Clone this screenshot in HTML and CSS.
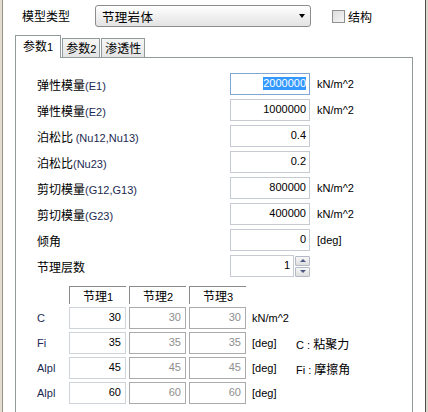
FILE: index.html
```html
<!DOCTYPE html>
<html>
<head>
<meta charset="utf-8">
<link rel="stylesheet" href="styles.css">
</head>
<body>
<div class="win">
  <div class="edge-l"></div>
  <div class="main">
    <div class="toprow">
      <div class="toplabel">模型类型</div>
      <div class="combo">
        <span class="combo-text">节理岩体</span>
        <span class="combo-arrow"></span>
      </div>
      <div class="check">
        <span class="checkbox"></span>
        <span class="check-text">结构</span>
      </div>
    </div>
    <div class="tabs">
      <div class="tab active">参数<span class="lat">1</span></div>
      <div class="tab">参数<span class="lat">2</span></div>
      <div class="tab">渗透性</div>
    </div>
    <div class="panel">
      <div class="form">
        <div class="lbl">弹性模量<span class="lat">(E1)</span></div>
        <div class="field focus"><span class="sel">2000000</span></div>
        <div class="unit">kN/m^2</div>

        <div class="lbl">弹性模量<span class="lat">(E2)</span></div>
        <div class="field">1000000</div>
        <div class="unit">kN/m^2</div>

        <div class="lbl">泊松比 <span class="lat">(Nu12,Nu13)</span></div>
        <div class="field">0.4</div>
        <div class="unit"></div>

        <div class="lbl">泊松比<span class="lat">(Nu23)</span></div>
        <div class="field">0.2</div>
        <div class="unit"></div>

        <div class="lbl">剪切模量<span class="lat">(G12,G13)</span></div>
        <div class="field">800000</div>
        <div class="unit">kN/m^2</div>

        <div class="lbl">剪切模量<span class="lat">(G23)</span></div>
        <div class="field">400000</div>
        <div class="unit">kN/m^2</div>

        <div class="lbl">倾角</div>
        <div class="field">0</div>
        <div class="unit">[deg]</div>

        <div class="lbl">节理层数</div>
        <div class="spin">
          <div class="field spin-field">1</div>
          <div class="spin-btns">
            <div class="sbtn"><span class="up"></span></div>
            <div class="sbtn"><span class="down"></span></div>
          </div>
        </div>
        <div class="unit"></div>
      </div>

      <div class="grid">
        <div></div>
        <div class="hd">节理<span class="lat">1</span></div>
        <div class="hd">节理<span class="lat">2</span></div>
        <div class="hd">节理<span class="lat">3</span></div>
        <div></div>
        <div></div>

        <div class="rl">C</div>
        <div class="cell c1">30</div>
        <div class="cell">30</div>
        <div class="cell">30</div>
        <div class="gu">kN/m^2</div>
        <div></div>

        <div class="rl">Fi</div>
        <div class="cell c1">35</div>
        <div class="cell">35</div>
        <div class="cell">35</div>
        <div class="gu">[deg]</div>
        <div class="note"><span class="lat">C : </span>粘聚力</div>

        <div class="rl">Alpl</div>
        <div class="cell c1">45</div>
        <div class="cell">45</div>
        <div class="cell">45</div>
        <div class="gu">[deg]</div>
        <div class="note"><span class="lat">Fi : </span>摩擦角</div>

        <div class="rl">Alpl</div>
        <div class="cell c1">60</div>
        <div class="cell">60</div>
        <div class="cell">60</div>
        <div class="gu">[deg]</div>
        <div></div>
      </div>
    </div>
  </div>
  <div class="edge-r"></div>
</div>
</body>
</html>
```

FILE: styles.css
```css
html, body {
  margin: 0;
  padding: 0;
  background: #ffffff;
}

body {
  font-family: "Noto Sans CJK SC", "Liberation Sans", sans-serif;
  font-size: 12px;
  color: #000;
}

.win {
  width: 428px;
  height: 412px;
  display: flex;
  overflow: hidden;
  background: #fff;
}

.edge-l {
  width: 2px;
  background: #e2ddd0;
  border-right: 1px solid #9c9483;
  flex: none;
}

.edge-r {
  width: 2px;
  background: #dcd8cc;
  border-left: 1px solid #4e4e4e;
  flex: none;
}

.main {
  flex: 1;
  display: flex;
  flex-direction: column;
  min-width: 0;
}

.lat {
  font-family: "Liberation Sans", sans-serif;
  font-size: 11px;
}

.lbl .lat {
  color: #1c2a52;
}

/* top row */
.toprow {
  display: flex;
  align-items: center;
  padding-top: 5px;
  height: 22px;
}

.toplabel {
  margin-left: 19px;
  width: 73px;
  line-height: 22px;
}

.combo {
  height: 20px;
  border: 1px solid #8c8c8c;
  border-radius: 3px;
  background: linear-gradient(#ffffff, #f2f2f2 45%, #e3e3e3);
  display: flex;
  align-items: center;
  justify-content: space-between;
  padding: 0 4px 0 6px;
  box-sizing: content-box;
  width: 204px;
}

.combo-text {
  font-size: 12.5px;
  letter-spacing: 0.3px;
}

.combo-arrow {
  width: 0;
  height: 0;
  border-left: 3.5px solid transparent;
  border-right: 3.5px solid transparent;
  border-top: 4px solid #000;
  margin-right: 1px;
}

.check {
  display: flex;
  align-items: center;
  margin-left: 21px;
}

.checkbox {
  width: 11px;
  height: 11px;
  border: 1px solid #8e8f8f;
  background: linear-gradient(135deg, #dcdcdc, #f6f6f6);
  margin-right: 3px;
}

/* tabs */
.tabs {
  display: flex;
  align-items: flex-end;
  margin-left: 12px;
  margin-top: 8px;
  height: 22px;
}

.tab {
  height: 18px;
  line-height: 18px;
  border: 1px solid #919b9c;
  border-bottom: none;
  background: linear-gradient(#f6f6f6, #e4e4e4);
  padding: 0 3px;
  margin-left: 1px;
}

.tab.active {
  height: 22px;
  line-height: 20px;
  background: #fff;
  margin-left: 0;
  margin-bottom: -1px;
  padding: 0 7px;
  position: relative;
  z-index: 1;
}

/* panel */
.panel {
  margin-left: 12px;
  width: 398px;
  border: 1px solid #919b9c;
  border-bottom: none;
  padding: 15px 0 0 21px;
  box-sizing: border-box;
  flex: none;
  height: 400px;
}

.form {
  display: grid;
  grid-template-columns: 193px 80px auto;
  grid-auto-rows: 22px;
  row-gap: 4px;
  align-items: center;
}

.field {
  height: 22px;
  box-sizing: border-box;
  border: 1px solid #c6cbd1;
  text-align: right;
  padding-right: 3px;
  font-family: "Liberation Sans", sans-serif;
  font-size: 11px;
  line-height: 19px;
  background: #fff;
}

.field.focus {
  border-color: #80a6d2;
}

.sel {
  background: #3399ff;
  color: #fff;
  display: inline-block;
  line-height: 13px;
}

.unit {
  padding-left: 7px;
  font-family: "Liberation Sans", sans-serif;
  font-size: 11px;
}

.spin {
  display: flex;
  align-items: center;
  height: 22px;
}

.spin-field {
  width: 76px;
}

.spin-btns {
  display: flex;
  flex-direction: column;
  gap: 1px;
  margin-left: 1px;
}

.sbtn {
  width: 13px;
  height: 8px;
  border: 1px solid #b3bac6;
  border-radius: 1px;
  background: linear-gradient(#f7f7f7, #dedede);
  display: flex;
  align-items: center;
  justify-content: center;
}

.up {
  border-left: 3px solid transparent;
  border-right: 3px solid transparent;
  border-bottom: 3px solid #4d5b84;
}

.down {
  border-left: 3px solid transparent;
  border-right: 3px solid transparent;
  border-top: 3px solid #4d5b84;
}

/* joint grid */
.grid {
  margin-top: 9px;
  display: grid;
  grid-template-columns: 29px 57px 57px 57px 44px auto;
  grid-template-rows: 18px;
  grid-auto-rows: 22px;
  column-gap: 3px;
  row-gap: 3px;
  align-items: center;
}

.hd {
  height: 18px;
  box-sizing: border-box;
  border-top: 1px solid #8a8a8a;
  border-left: 1px solid #8a8a8a;
  text-align: center;
  line-height: 17px;
}

.rl {
  font-family: "Liberation Sans", sans-serif;
  font-size: 11px;
  color: #1c2a52;
}

.cell {
  height: 22px;
  box-sizing: border-box;
  border: 1px solid #ababab;
  text-align: right;
  padding-right: 4px;
  font-family: "Liberation Sans", sans-serif;
  font-size: 11px;
  line-height: 19px;
  color: #8e8e8e;
}

.cell.c1 {
  border-color: #cfd4da;
  color: #000;
}

.gu {
  padding-left: 3px;
  font-family: "Liberation Sans", sans-serif;
  font-size: 11px;
}

.note {
  white-space: nowrap;
}
```
